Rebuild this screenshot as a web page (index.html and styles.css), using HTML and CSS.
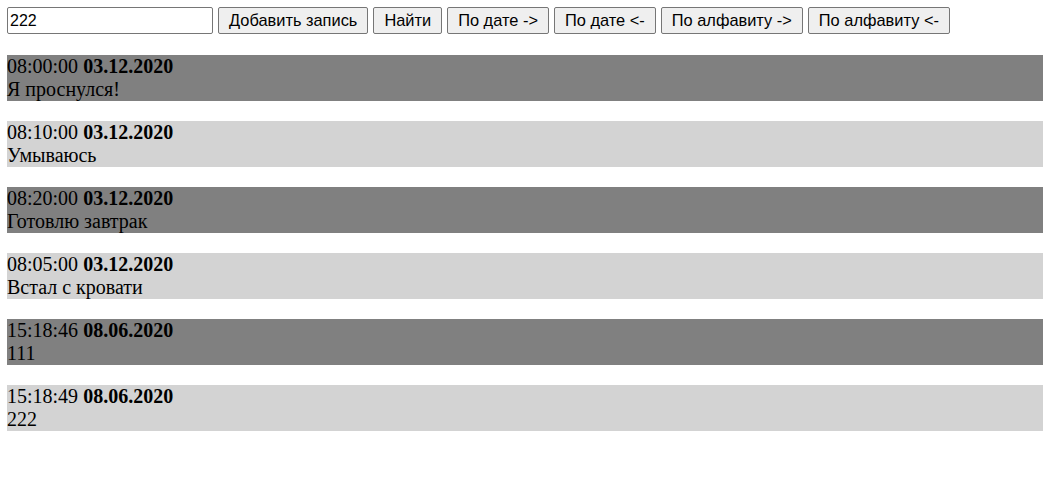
FILE: index.html
```html
<!DOCTYPE html>
<html lang="ru">
<head>
<meta charset="utf-8">
<title>Записи</title>
<link rel="stylesheet" href="styles.css">
</head>
<body>
<div class="toolbar">
  <input class="field" type="text" value="222">
  <button class="btn">Добавить запись</button>
  <button class="btn">Найти</button>
  <button class="btn">По дате -&gt;</button>
  <button class="btn">По дате &lt;-</button>
  <button class="btn">По алфавиту -&gt;</button>
  <button class="btn">По алфавиту &lt;-</button>
</div>
<div class="list">
  <div class="entry dark"><div>08:00:00 <b>03.12.2020</b></div><div>Я проснулся!</div></div>
  <div class="entry light"><div>08:10:00 <b>03.12.2020</b></div><div>Умываюсь</div></div>
  <div class="entry dark"><div>08:20:00 <b>03.12.2020</b></div><div>Готовлю завтрак</div></div>
  <div class="entry light"><div>08:05:00 <b>03.12.2020</b></div><div>Встал с кровати</div></div>
  <div class="entry dark"><div>15:18:46 <b>08.06.2020</b></div><div>111</div></div>
  <div class="entry light"><div>15:18:49 <b>08.06.2020</b></div><div>222</div></div>
</div>
</body>
</html>
```
FILE: styles.css
```css
html, body {
  margin: 0;
  padding: 0;
  background: #fff;
}
body {
  font-family: "Liberation Serif", "Times New Roman", serif;
  font-size: 20px;
  color: #000;
}
.toolbar {
  display: flex;
  gap: 5px;
  padding: 7px 0 0 7px;
  height: 27px;
}
.field {
  box-sizing: border-box;
  width: 206px;
  height: 27px;
  border: 1px solid #767676;
  border-radius: 2px;
  padding: 1px 2px;
  font-family: "Liberation Sans", Arial, sans-serif;
  font-size: 16px;
  color: #000;
  background: #fff;
  margin: 0;
}
.btn {
  box-sizing: border-box;
  height: 27px;
  border: 1px solid #767676;
  border-radius: 2px;
  background: #efefef;
  padding: 1px 10px;
  font-family: "Liberation Sans", Arial, sans-serif;
  font-size: 16.4px;
  color: #000;
  margin: 0;
}
.list {
  display: flex;
  flex-direction: column;
  gap: 20px;
  padding: 21px 0 0 7px;
}
.entry {
  height: 46px;
  line-height: 23px;
}
.dark { background: #808080; }
.light { background: #d3d3d3; }
```
